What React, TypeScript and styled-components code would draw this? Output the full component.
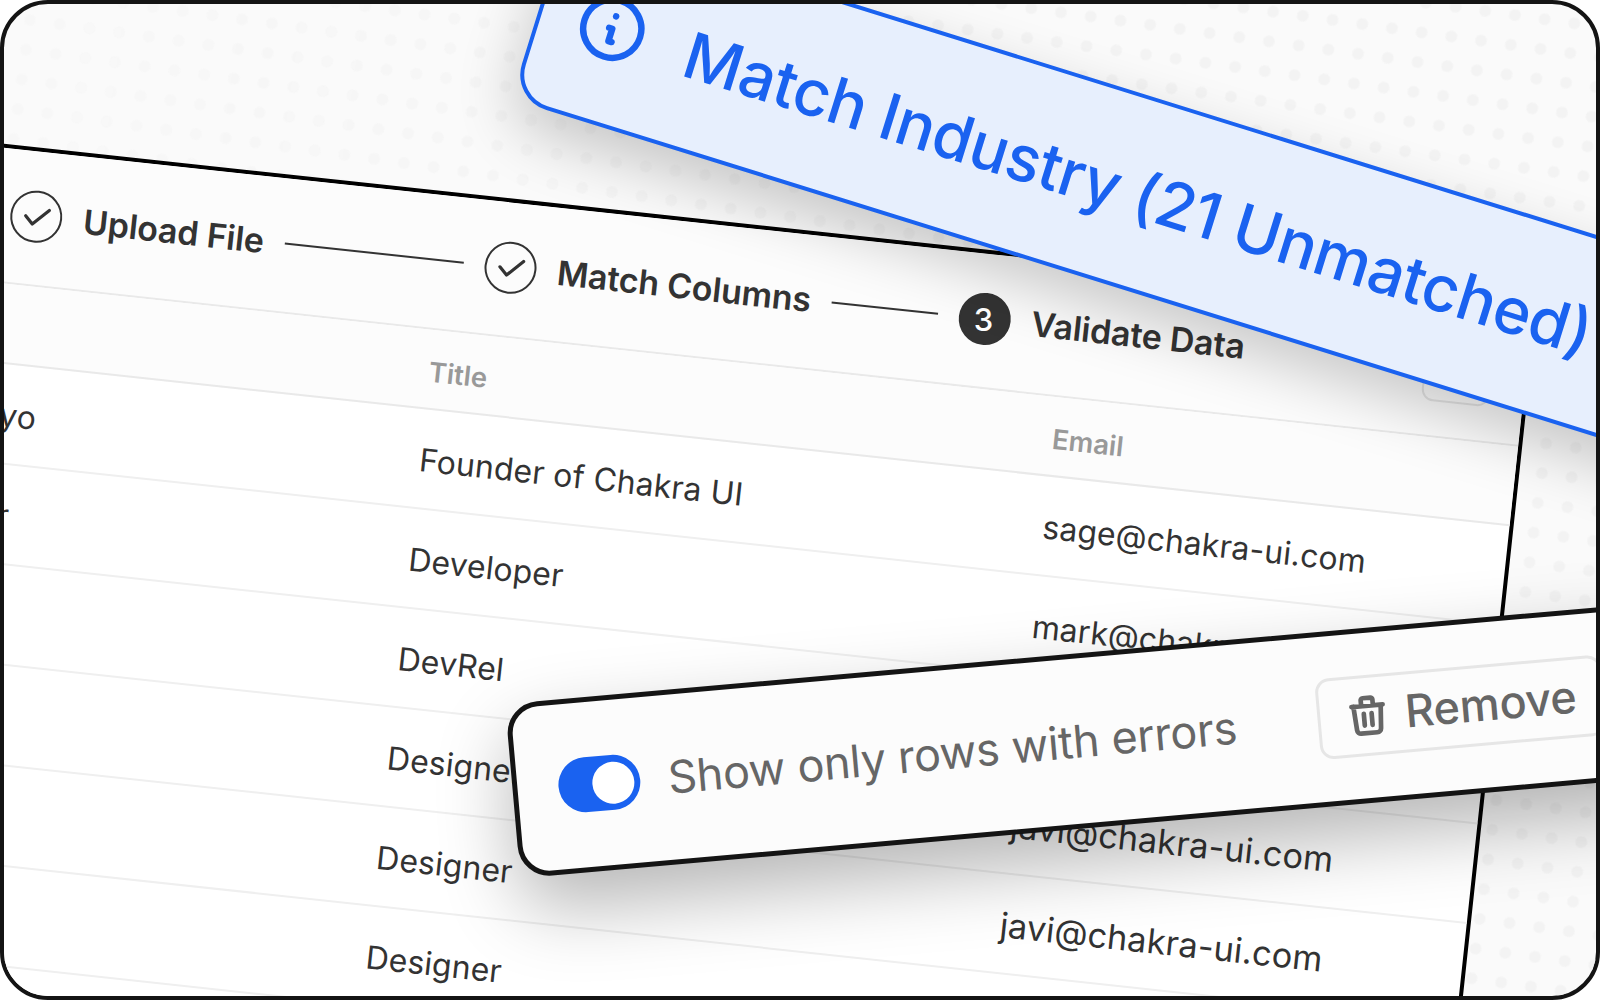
import React from "react";
import styled, { createGlobalStyle, css } from "styled-components";

const GlobalStyle = createGlobalStyle`
  *, *::before, *::after { box-sizing: border-box; }
  html, body { margin: 0; padding: 0; background: #ffffff; }
  body { font-family: Inter, "Liberation Sans", sans-serif; overflow: hidden; }
`;

const Frame = styled.main`
  position: relative;
  width: 1600px;
  height: 1000px;
  overflow: hidden;
  background: #fafafa;
  border: 4px solid #141414;
  border-radius: 48px;
`;

const DotField = styled.div`
  position: absolute;
  left: -804px;
  top: -804px;
  width: 3200px;
  height: 3000px;
  transform-origin: 830px 820px;
  transform: rotate(7.94deg);
  background-image: radial-gradient(circle at 15px 15px, #f3f3f3 5.2px, rgba(243, 243, 243, 0) 6.4px);
  background-size: 30px 30px;
  background-position: 5px 25px;
  mask-image: linear-gradient(90deg, rgba(0, 0, 0, 0.3) 820px, #000 1800px);
`;

const TablePanel = styled.section`
  position: absolute;
  left: -237.5px;
  top: 305.4px;
  width: 1770px;
  height: 1300px;
  display: flex;
  flex-direction: column;
  background: #ffffff;
  border: 4px solid #000000;
  border-radius: 16px;
  overflow: hidden;
  transform-origin: top right;
  transform: rotate(6.15deg);
  color: #333333;
`;

const Stepper = styled.header`
  flex: none;
  height: 134.5px;
  display: flex;
  align-items: center;
  padding: 0 34px 2px 238.3px;
  background: #fcfcfc;
  border-bottom: 2px solid #e9e9e9;
`;

const Step = styled.div<{ $last?: boolean }>`
  display: flex;
  align-items: center;
  gap: 21px;
  ${(p) =>
    p.$last
      ? css`
          flex: 1;
        `
      : css`
          flex: none;
          width: 476.7px;
          padding-right: 21px;
        `}
`;

const StepBadge = styled.span<{ $filled?: boolean }>`
  flex: none;
  width: 52px;
  height: 52px;
  border-radius: 50%;
  border: 2.4px solid #333333;
  display: flex;
  align-items: center;
  justify-content: center;
  background: ${(p) => (p.$filled ? "#333333" : "transparent")};
  color: #ffffff;
  font-size: 31px;
  font-weight: 500;
  line-height: 1;
`;

const BadgeNumber = styled.span`
  transform: translateX(-1px) rotate(-6.15deg);
`;

const StepLabel = styled.span`
  font-size: 34px;
  font-weight: 600;
  letter-spacing: -0.16px;
  line-height: 44px;
  white-space: nowrap;
`;

const StepLine = styled.span`
  flex: 1;
  height: 2px;
  background: #333333;
`;

const CloseButton = styled.button`
  flex: none;
  width: 68px;
  height: 68px;
  background: transparent;
  border: 2px solid #e5e5e5;
  border-radius: 12px;
`;

const gridRow = css`
  flex: none;
  display: grid;
  grid-template-columns: 627px 627px 1fr;
  align-items: center;
  padding-left: 44px;
`;

const HeadRow = styled.div`
  ${gridRow}
  height: 80px;
  padding-top: 6px;
  background: #fcfcfc;
  border-bottom: 2px solid #e9e9e9;
  color: #999999;
  font-size: 27.5px;
  font-weight: 600;
`;

const BodyRow = styled.div`
  ${gridRow}
  height: 100px;
  padding-top: 4px;
  border-bottom: 2px solid #efefef;
  font-size: 32px;
  font-weight: 400;
  letter-spacing: 0.12px;
`;

const Cell = styled.span<{ $large?: boolean }>`
  white-space: nowrap;
  font-size: ${(p) => (p.$large ? "34.3px" : "inherit")};
`;

const Banner = styled.aside`
  position: absolute;
  left: 506.6px;
  top: -98.3px;
  width: 1400px;
  height: 193px;
  display: flex;
  align-items: center;
  gap: 38.5px;
  padding: 0 0 1.5px 33.3px;
  background: #e7effd;
  border: 4px solid #1a62f0;
  border-radius: 37px;
  box-shadow: 0 24px 60px rgba(0, 0, 0, 0.2);
  transform-origin: bottom left;
  transform: rotate(17.3deg);
  color: #1a62f0;
`;

const BannerText = styled.span`
  padding-top: 2px;
  font-size: 64px;
  font-weight: 500;
  letter-spacing: -0.5px;
  line-height: 80px;
  white-space: nowrap;
`;

const Toolbar = styled.section`
  position: absolute;
  left: 501px;
  top: 699.7px;
  width: 1160px;
  height: 175px;
  display: flex;
  align-items: center;
  padding-left: 40.8px;
  background: #fcfcfc;
  border: 5px solid #141414;
  border-radius: 32px;
  box-shadow: 0 32px 74px rgba(0, 0, 0, 0.29);
  transform-origin: top left;
  transform: rotate(-5.06deg);
  color: #666666;
`;

const Toggle = styled.span`
  flex: none;
  width: 82.7px;
  height: 55.6px;
  display: flex;
  align-items: center;
  justify-content: flex-end;
  padding-right: 6.8px;
  border-radius: 28px;
  background: #1a62f0;
`;

const Knob = styled.span`
  width: 42px;
  height: 42px;
  border-radius: 50%;
  background: #ffffff;
`;

const ToggleLabel = styled.span`
  flex: none;
  width: 652px;
  margin-left: 27.5px;
  font-size: 45px;
  font-weight: 400;
  letter-spacing: -0.31px;
  line-height: 60px;
  white-space: nowrap;
`;

const RemoveButton = styled.button`
  flex: none;
  width: 287px;
  height: 81px;
  display: flex;
  align-items: center;
  gap: 14px;
  padding: 0 0 1px 24px;
  background: transparent;
  border: 3px solid #e6e6e6;
  border-radius: 14px;
  color: inherit;
  font-family: inherit;
  font-size: 45px;
  font-weight: 500;
  letter-spacing: -0.15px;
  line-height: 60px;
  white-space: nowrap;
`;

const Glyph = styled.svg<{ $size: number; $weight?: number }>`
  flex: none;
  display: block;
  width: ${(p) => p.$size}px;
  height: ${(p) => p.$size}px;
  fill: none;
  stroke: currentColor;
  stroke-width: ${(p) => p.$weight ?? 2};
  stroke-linecap: round;
  stroke-linejoin: round;
`;

const CheckGlyph = styled.svg`
  flex: none;
  width: 40px;
  height: 40px;
  fill: none;
  stroke: #333333;
  stroke-width: 3.2;
  stroke-linecap: round;
  stroke-linejoin: round;
`;

const Check = () => (
  <CheckGlyph viewBox="-20 -20 40 40">
    <path d="M-10.6 0.2L-3.2 7.7L12.4 -7.6" />
  </CheckGlyph>
);

const rows = [
  { name: "Segun Adebayo", title: "Founder of Chakra UI", email: "sage@chakra-ui.com" },
  { name: "Mark Chandler", title: "Developer", email: "mark@chakra-ui.com" },
  { name: "Lazar Nikolov", title: "DevRel", email: "lazar@chakra-ui.com" },
  { name: "Javier Alaves", title: "Designer", email: "javi@chakra-ui.com", large: true },
  { name: "Javier Alaves", title: "Designer", email: "javi@chakra-ui.com", large: true },
  { name: "Javier Alaves", title: "Designer", email: "javi@chakra-ui.com", large: true },
];

export default function App() {
  return (
    <>
      <GlobalStyle />
      <Frame>
        <DotField />
        <TablePanel>
          <Stepper>
            <Step>
              <StepBadge>
                <Check />
              </StepBadge>
              <StepLabel>Upload File</StepLabel>
              <StepLine />
            </Step>
            <Step>
              <StepBadge>
                <Check />
              </StepBadge>
              <StepLabel>Match Columns</StepLabel>
              <StepLine />
            </Step>
            <Step $last>
              <StepBadge $filled>
                <BadgeNumber>3</BadgeNumber>
              </StepBadge>
              <StepLabel>Validate Data</StepLabel>
            </Step>
            <CloseButton aria-label="Close" />
          </Stepper>
          <HeadRow>
            <Cell>Name</Cell>
            <Cell>Title</Cell>
            <Cell>Email</Cell>
          </HeadRow>
          {rows.map((row, i) => (
            <BodyRow key={i}>
              <Cell>{row.name}</Cell>
              <Cell>{row.title}</Cell>
              <Cell $large={row.large}>{row.email}</Cell>
            </BodyRow>
          ))}
        </TablePanel>
        <Banner>
          <Glyph $size={77.6} viewBox="0 0 24 24">
            <path d="M13 16h-1v-4h-1m1-4h.01M21 12a9 9 0 11-18 0 9 9 0 0118 0z" />
          </Glyph>
          <BannerText>Match Industry (21 Unmatched)</BannerText>
        </Banner>
        <Toolbar>
          <Toggle>
            <Knob />
          </Toggle>
          <ToggleLabel>Show only rows with errors</ToggleLabel>
          <RemoveButton>
            <Glyph $size={47} $weight={2.4} viewBox="0 0 24 24">
              <path d="M19 7l-.867 12.142A2 2 0 0116.138 21H7.862a2 2 0 01-1.995-1.858L5 7m5 4v6m4-6v6m1-10V4a1 1 0 00-1-1h-4a1 1 0 00-1 1v3M4 7h16" />
            </Glyph>
            Remove
          </RemoveButton>
        </Toolbar>
      </Frame>
    </>
  );
}
